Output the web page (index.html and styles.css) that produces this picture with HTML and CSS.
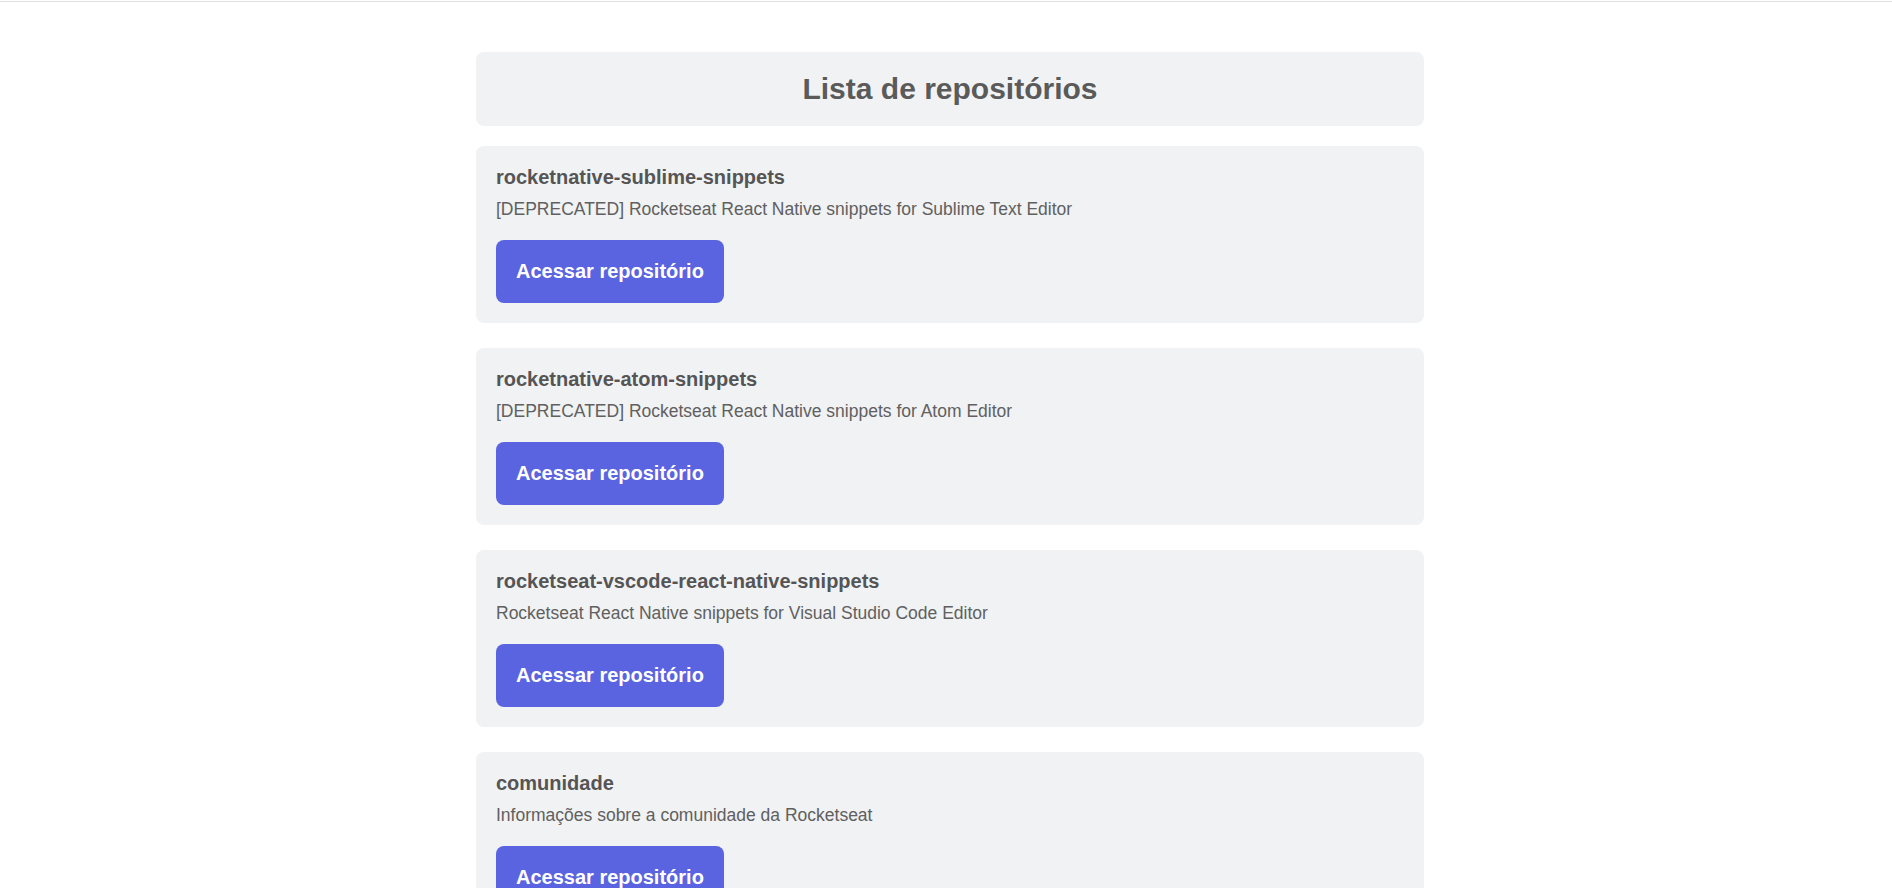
FILE: index.html
```html
<!DOCTYPE html>
<html lang="pt-BR">
<head>
<meta charset="utf-8">
<title>Lista de repositórios</title>
<link rel="stylesheet" href="styles.css">
</head>
<body>
<div class="topline"></div>
<main class="container">
  <header class="page-header">
    <h1>Lista de repositórios</h1>
  </header>
  <ul class="repo-list">
    <li class="repo-card">
      <h2 class="repo-name">rocketnative-sublime-snippets</h2>
      <p class="repo-desc">[DEPRECATED] Rocketseat React Native snippets for Sublime Text Editor</p>
      <a class="repo-btn" href="#">Acessar repositório</a>
    </li>
    <li class="repo-card">
      <h2 class="repo-name">rocketnative-atom-snippets</h2>
      <p class="repo-desc">[DEPRECATED] Rocketseat React Native snippets for Atom Editor</p>
      <a class="repo-btn" href="#">Acessar repositório</a>
    </li>
    <li class="repo-card">
      <h2 class="repo-name">rocketseat-vscode-react-native-snippets</h2>
      <p class="repo-desc">Rocketseat React Native snippets for Visual Studio Code Editor</p>
      <a class="repo-btn" href="#">Acessar repositório</a>
    </li>
    <li class="repo-card">
      <h2 class="repo-name">comunidade</h2>
      <p class="repo-desc">Informações sobre a comunidade da Rocketseat</p>
      <a class="repo-btn" href="#">Acessar repositório</a>
    </li>
  </ul>
</main>
</body>
</html>
```

FILE: styles.css
```css
* { box-sizing: border-box; }
html, body { margin: 0; padding: 0; background: #fff; }
body {
  font-family: "Liberation Sans", Arial, sans-serif;
  padding-left: 8px;
  overflow: hidden;
}
.topline {
  height: 2px;
  margin-left: -8px;
  border-top: 1px solid #fff;
  background: #e2e2e2;
}
.container {
  width: 948px;
  margin: 50px auto 0;
}
.page-header {
  background: #f1f2f4;
  border-radius: 8px;
  padding: 20px;
  text-align: center;
}
.page-header h1 {
  margin: 0;
  font-size: 30px;
  font-weight: bold;
  color: #5a5a5a;
}
.repo-list {
  list-style: none;
  margin: 20px 0 0;
  padding: 0;
  display: flex;
  flex-direction: column;
  gap: 25px;
}
.repo-card {
  background: #f1f2f4;
  border-radius: 8px;
  padding: 20px;
  display: flex;
  flex-direction: column;
  align-items: flex-start;
}
.repo-name {
  margin: 0;
  font-size: 20px;
  font-weight: bold;
  color: #555;
}
.repo-desc {
  margin: 10px 0 20px;
  font-size: 17.5px;
  line-height: 21px;
  color: #606060;
}
.repo-btn {
  display: inline-block;
  padding: 20px;
  border-radius: 8px;
  background: #5a63e0;
  color: #fff;
  font-size: 20px;
  font-weight: bold;
  text-decoration: none;
}
```
